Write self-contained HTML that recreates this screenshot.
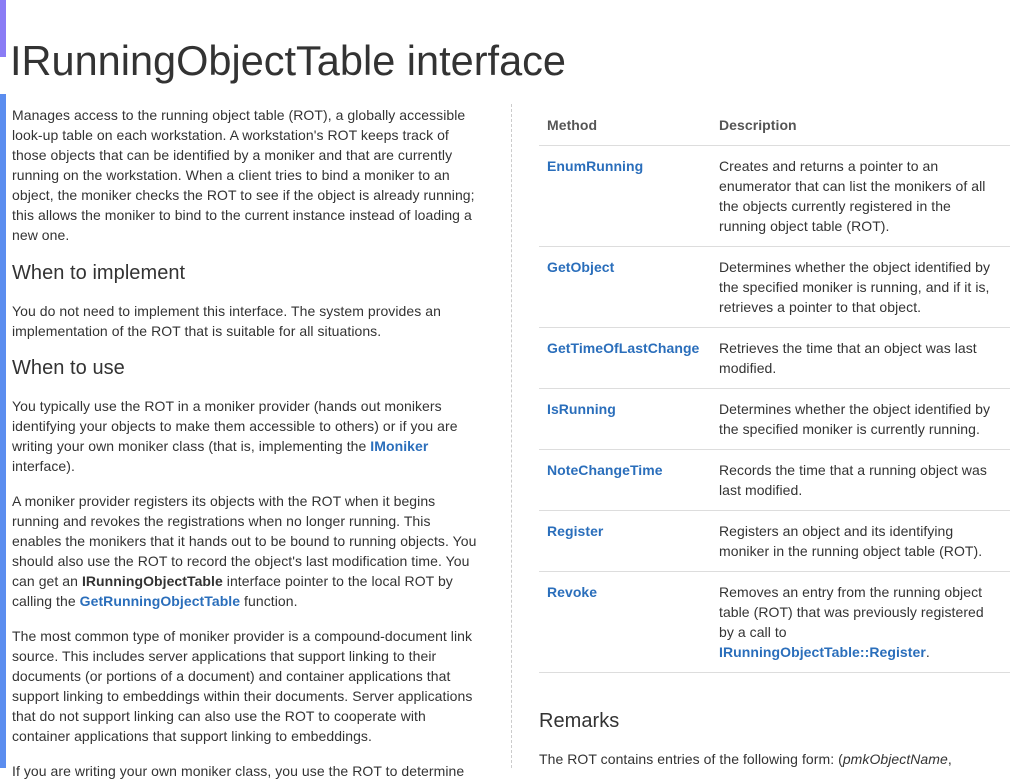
<!DOCTYPE html>
<html><head><style>
body{margin:0;width:1024px;height:768px;overflow:hidden;background:#fff;font-family:"Liberation Sans",sans-serif;color:#333;position:relative}
.a{position:absolute;font-size:14px;line-height:20px;white-space:nowrap;letter-spacing:.06px}
.h{position:absolute;font-size:20px;line-height:24px;white-space:nowrap;color:#333;letter-spacing:.05px}
a{color:#2a6ebb;font-weight:bold;text-decoration:none}
.m{position:absolute;left:547px;font-size:14px;line-height:20px;font-weight:bold;color:#2a6ebb;letter-spacing:.05px}
.d{position:absolute;left:719px;font-size:14px;line-height:20px;white-space:nowrap;letter-spacing:.06px}
.ln{position:absolute;left:539px;width:471px;height:1px;background:#ddd}
</style></head><body>
<div style="position:absolute;left:0;top:0;width:6px;height:57px;background:#8a7cf5"></div>
<div style="position:absolute;left:0;top:94px;width:6px;height:674px;background:#5b8def"></div>
<div style="position:absolute;left:10px;top:36px;font-size:41.5px;line-height:50px;color:#333">IRunningObjectTable interface</div>
<div style="position:absolute;left:511px;top:104px;height:664px;border-left:1px dashed #ccc"></div>

<div class="a" style="left:12px;top:105px">Manages access to the running object table (ROT), a globally accessible<br>look-up table on each workstation. A workstation's ROT keeps track of<br>those objects that can be identified by a moniker and that are currently<br>running on the workstation. When a client tries to bind a moniker to an<br>object, the moniker checks the ROT to see if the object is already running;<br>this allows the moniker to bind to the current instance instead of loading a<br>new one.</div>
<div class="h" style="left:12px;top:261px">When to implement</div>
<div class="a" style="left:12px;top:301px">You do not need to implement this interface. The system provides an<br>implementation of the ROT that is suitable for all situations.</div>
<div class="h" style="left:12px;top:356px">When to use</div>
<div class="a" style="left:12px;top:396px">You typically use the ROT in a moniker provider (hands out monikers<br>identifying your objects to make them accessible to others) or if you are<br>writing your own moniker class (that is, implementing the <a>IMoniker</a><br>interface).</div>
<div class="a" style="left:12px;top:491px">A moniker provider registers its objects with the ROT when it begins<br>running and revokes the registrations when no longer running. This<br>enables the monikers that it hands out to be bound to running objects. You<br>should also use the ROT to record the object's last modification time. You<br>can get an <b>IRunningObjectTable</b> interface pointer to the local ROT by<br>calling the <a>GetRunningObjectTable</a> function.</div>
<div class="a" style="left:12px;top:626px">The most common type of moniker provider is a compound-document link<br>source. This includes server applications that support linking to their<br>documents (or portions of a document) and container applications that<br>support linking to embeddings within their documents. Server applications<br>that do not support linking can also use the ROT to cooperate with<br>container applications that support linking to embeddings.</div>
<div class="a" style="left:12px;top:761px">If you are writing your own moniker class, you use the ROT to determine</div>

<div class="a" style="left:547px;top:115px;font-weight:bold;color:#555">Method</div>
<div class="a" style="left:719px;top:115px;font-weight:bold;color:#555">Description</div>
<div class="ln" style="top:145px"></div>
<div class="m" style="top:156px">EnumRunning</div>
<div class="d" style="top:156px">Creates and returns a pointer to an<br>enumerator that can list the monikers of all<br>the objects currently registered in the<br>running object table (ROT).</div>
<div class="ln" style="top:246px"></div>
<div class="m" style="top:257px">GetObject</div>
<div class="d" style="top:257px">Determines whether the object identified by<br>the specified moniker is running, and if it is,<br>retrieves a pointer to that object.</div>
<div class="ln" style="top:327px"></div>
<div class="m" style="top:338px">GetTimeOfLastChange</div>
<div class="d" style="top:338px">Retrieves the time that an object was last<br>modified.</div>
<div class="ln" style="top:388px"></div>
<div class="m" style="top:399px">IsRunning</div>
<div class="d" style="top:399px">Determines whether the object identified by<br>the specified moniker is currently running.</div>
<div class="ln" style="top:449px"></div>
<div class="m" style="top:460px">NoteChangeTime</div>
<div class="d" style="top:460px">Records the time that a running object was<br>last modified.</div>
<div class="ln" style="top:510px"></div>
<div class="m" style="top:521px">Register</div>
<div class="d" style="top:521px">Registers an object and its identifying<br>moniker in the running object table (ROT).</div>
<div class="ln" style="top:571px"></div>
<div class="m" style="top:582px">Revoke</div>
<div class="d" style="top:582px">Removes an entry from the running object<br>table (ROT) that was previously registered<br>by a call to<br><a>IRunningObjectTable::Register</a>.</div>
<div class="ln" style="top:672px"></div>
<div class="h" style="left:539px;top:709px">Remarks</div>
<div class="a" style="left:539px;top:749px">The ROT contains entries of the following form: (<i>pmkObjectName</i>,</div>
</body></html>
